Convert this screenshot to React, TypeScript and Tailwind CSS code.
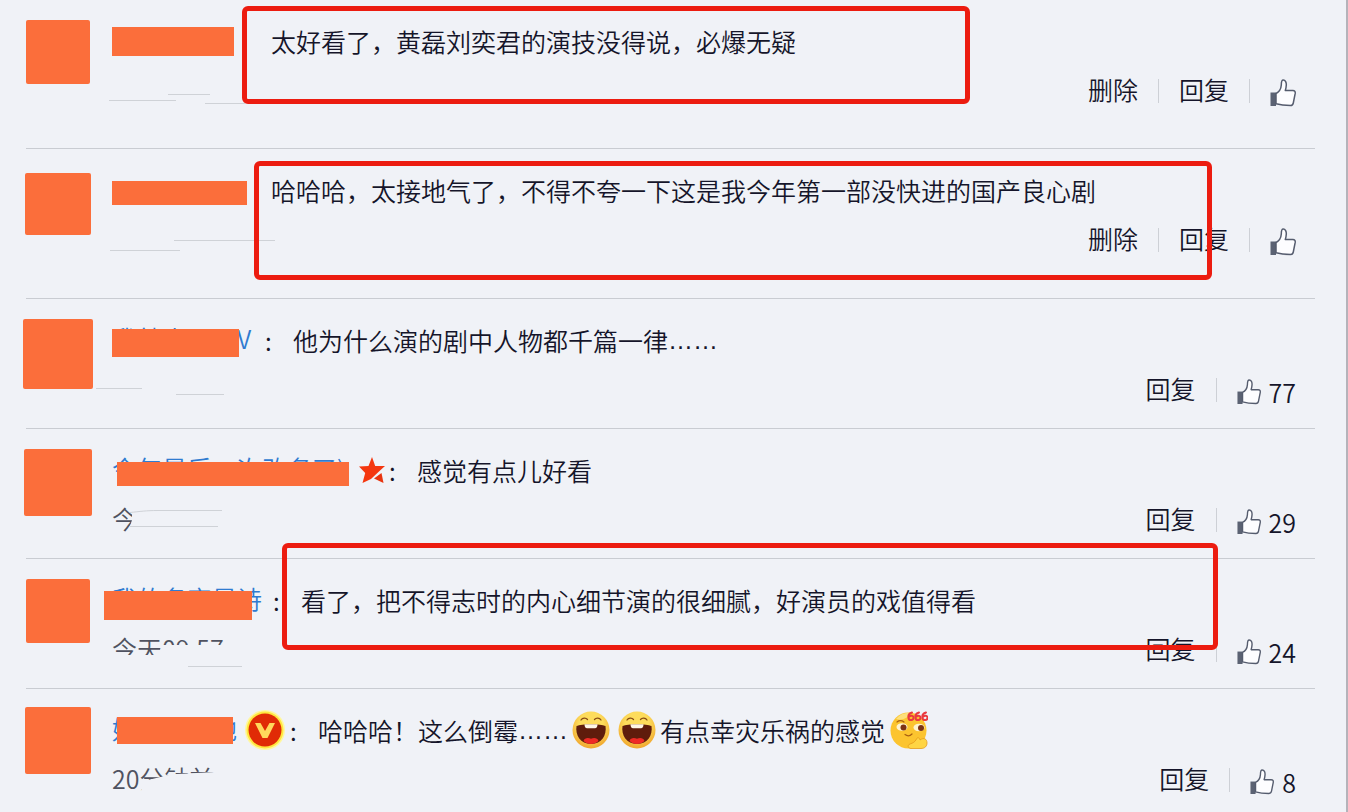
import type { ReactNode } from "react";

type Comment = {
  id: number;
  avatar: string;
  name: string;
  nameBox: string;
  bar: string;
  badge?: ReactNode;
  colon?: boolean;
  text: ReactNode;
  time?: string;
  timeClip?: string;
  scratches: string[];
  canDelete?: boolean;
  likes?: number;
  bottom: string;
  frame?: string;
};

const Thumb = ({ size }: { size: string }) => (
  <svg viewBox="0 0 26 28" className={size} aria-hidden="true">
    <path d="M0.500 13.500h5.500v13.500h-5.500z" fill="#5b6273" />
    <path
      d="M6 14.500c3-1.500 5-4.500 5.300-8.500 0-2.500.4-5 1.900-5 2.300 0 3.200 2.500 3.100 5-.1 2.200-.5 3.800-1 5.500h7.600c2 0 2.500 1.300 2.300 2.900l-1.900 9.600c-.3 1.700-1.200 2.500-2.800 2.500-4.500 0-9.500-.3-14.500-1.800z"
      fill="#fdfdff"
      stroke="#555c6e"
      strokeWidth="1.500"
      strokeLinejoin="round"
    />
  </svg>
);

const Star = () => (
  <svg viewBox="0 0 26 26" className="mr-1 h-[26px] w-[26px]" aria-hidden="true">
    <path
      d="M13 0l3.200 9H26l-5.500 5-8.500 8-8.500 4 2.700-10L0 9.500l9.500-.5z"
      fill="#f4370f"
    />
    <path d="M15 21.500l7.500-5.500 2 10z" fill="#e8340f" />
  </svg>
);

const VBadge = () => (
  <svg viewBox="0 0 40 42" className="mr-[5px] h-[42px] w-10" aria-hidden="true">
    <circle cx="20" cy="21" r="20" fill="#fff7a0" />
    <circle cx="20" cy="21" r="18.500" fill="#ffe83e" />
    <circle cx="20" cy="21" r="16.500" fill="#e02b06" />
    <path d="M10 14h5.500l4.500 8 4.500-8h5.500l-7.500 15h-5z" fill="#ffd95c" />
  </svg>
);

const Laugh = () => (
  <svg viewBox="0 0 38 38" className="mx-1 h-[38px] w-[38px]" role="img" aria-label="哈哈">
    <defs>
      <radialGradient id="laugh" cx="50%" cy="35%" r="65%">
        <stop offset="0.5" stopColor="#fddc5c" />
        <stop offset="1" stopColor="#f0a52c" />
      </radialGradient>
    </defs>
    <circle cx="19" cy="19" r="18.500" fill="url(#laugh)" />
    <path
      d="M9 9c1.500-2.300 5-2.300 6.500-.5M22.500 8.500c1.500-1.800 5-1.800 6.500.5"
      fill="none"
      stroke="#8a4c14"
      strokeWidth="1.300"
      strokeLinecap="round"
    />
    <path d="M4.500 15c5-2.500 24-2.500 29 0 1.500 9-4 18-14.500 18s-16-9-14.500-18z" fill="#5f1c0c" />
    <path d="M12.500 13.300h13c0 2.700-1 3.900-2.500 3.900h-8c-1.500 0-2.500-1.200-2.500-3.900z" fill="#fff6e6" />
    <path d="M11.500 30c1-3.500 5-3.500 7.500-2.200 2.500-1.300 6.500-1.300 7.500 2.200-4 4-11 4-15 0z" fill="#ee2a25" />
  </svg>
);

const Six = () => (
  <svg viewBox="0 0 38 38" className="ml-[5px] h-[38px] w-[38px]" role="img" aria-label="666">
    <circle cx="18.500" cy="19.500" r="18" fill="#fcc42f" />
    <path d="M6 8c4-5 10-7 15-6-3 5-9 8-15 6z" fill="#fde07a" />
    <ellipse cx="12" cy="16" rx="5.500" ry="3.800" fill="#fff3cf" />
    <ellipse cx="29" cy="16.500" rx="5.500" ry="3.800" fill="#fff3cf" />
    <circle cx="13.500" cy="16.500" r="3" fill="#7c3214" />
    <circle cx="31" cy="17" r="3" fill="#7c3214" />
    <path
      d="M7 11c2-1.500 5-1.500 7 0M15 23.500c2 1.500 5 1.500 7-.5"
      fill="none"
      stroke="#a85f12"
      strokeWidth="1.200"
      strokeLinecap="round"
    />
    <path
      d="M20 33c3-1 5-2 6.500-5 .5-2 3.500-1.500 3.500 1 4-3 7-1 7 3 0 3-2 5.500-6 5.500H21c-3 0-4-3.500-1-4.500z"
      fill="#ffd544"
      stroke="#e59a1c"
      strokeWidth="0.800"
    />
    <g fill="none" stroke="#ea3a3f" strokeWidth="2" strokeLinecap="round">
      <path d="M22 1.500c-3 1-4 3.500-3.500 5.500.5 3 5 2.500 5-.2 0-2.300-3-2.800-4.500-.8" />
      <path d="M29 1.500c-3 1-4 3.500-3.500 5.500.5 3 5 2.500 5-.2 0-2.300-3-2.800-4.500-.8" />
      <path d="M36 1.500c-3 1-4 3.500-3.500 5.500.5 3 5 2.500 5-.2 0-2.300-3-2.800-4.500-.8" />
    </g>
  </svg>
);

const Dots = () => <span className="font-['Liberation_Sans',sans-serif]">……</span>;

const comments: Comment[] = [
  {
    id: 1,
    avatar: "mt-5 h-16 w-16",
    name: "",
    nameBox: "w-[159px]",
    bar: "left-0 top-1 h-[29px] w-[122px]",
    text: "太好看了，黄磊刘奕君的演技没得说，必爆无疑",
    scratches: ["M-3 27.500h67", "M56 21.500h42", "M93 30.500h40"],
    canDelete: true,
    bottom: "pb-[39px]",
    frame: "left-[242px] right-[376px] top-1.5 h-[98px]",
  },
  {
    id: 2,
    avatar: "mt-6 h-[62px] w-[66px]",
    name: "",
    nameBox: "w-[159px]",
    bar: "left-0 top-[9px] h-6 w-[135px]",
    text: "哈哈哈，太接地气了，不得不夸一下这是我今年第一部没快进的国产良心剧",
    scratches: ["M-2 28.500h70", "M62 18.500h101"],
    canDelete: true,
    bottom: "pb-10",
    frame: "left-[254px] right-[134px] top-3 h-[119px]",
  },
  {
    id: 3,
    avatar: "mt-5 h-[70px] w-[70px]",
    name: "我就小周周V",
    nameBox: "w-[153px]",
    bar: "left-0 top-[7px] h-7 w-[127px]",
    colon: true,
    text: (
      <>
        他为什么演的剧中人物都千篇一律
        <Dots />
      </>
    ),
    scratches: ["M-16 16.500h46", "M64 22.500h48"],
    likes: 77,
    bottom: "pb-5",
  },
  {
    id: 4,
    avatar: "mt-5 h-[67px] w-[68px]",
    name: "今年最后一次改名了)",
    nameBox: "w-[247px]",
    bar: "left-[5px] top-2.5 h-6 w-[232px]",
    badge: <Star />,
    colon: true,
    text: "感觉有点儿好看",
    time: "今天",
    timeClip: "[clip-path:polygon(0_0,20px_0,20px_50%,14px_100%,0_80%)]",
    scratches: ["M18 10.500c10-1 16-2 28-2h64", "M18 24.500h88"],
    likes: 29,
    bottom: "pb-5",
  },
  {
    id: 5,
    avatar: "mt-5 h-16 w-16",
    name: "我的名字是诗",
    nameBox: "w-[161px]",
    bar: "-left-2 top-[9px] h-[29px] w-[148px]",
    colon: true,
    text: "看了，把不得志时的内心细节演的很细腻，好演员的戏值得看",
    time: "今天09:57",
    timeClip: "[clip-path:polygon(0_0,100%_0,100%_36%,50px_36%,46px_64%,0_64%)]",
    scratches: ["M76 34.500h54"],
    likes: 24,
    bottom: "pb-5",
    frame: "left-[282px] right-[128px] -top-4 h-[107px]",
  },
  {
    id: 6,
    avatar: "mt-4.5 h-[67px] w-[66px]",
    name: "好吃的土地",
    nameBox: "w-[133px]",
    bar: "left-[5px] top-[5px] h-[27px] w-[116px]",
    badge: <VBadge />,
    colon: true,
    text: (
      <>
        哈哈哈！这么倒霉
        <Dots />
        <Laugh />
        <Laugh />
        有点幸灾乐祸的感觉
        <Six />
      </>
    ),
    time: "20分钟前",
    timeClip: "[clip-path:polygon(0_0,100%_0,100%_24%,60px_34%,36px_50%,24px_100%,0_100%)]",
    scratches: [],
    likes: 8,
    bottom: "pb-3",
  },
];

const Divider = () => <span className="h-6 w-px bg-[#cdd0d6]" />;

const CommentRow = ({ item }: { item: Comment }) => {
  return (
    <li className="relative">
      <div className={`flex pl-[23px] pr-[50px] ${item.bottom}`}>
        {/* Avatar */}
        <div className="flex w-[70px] shrink-0 items-start justify-center">
          <div className={`rounded-xs bg-[#fb6e3b] ${item.avatar}`} />
        </div>

        <div className="ml-[19px] min-w-0 flex-1 pt-[23px]">
          {/* Name and message */}
          <div className="flex h-9 items-center whitespace-nowrap">
            <div className={`relative h-9 shrink-0 ${item.nameBox}`}>
              <a href="#" className="block leading-8 text-[#2f7bd0]">
                {item.name}
              </a>
              <span className={`absolute bg-[#fb6e3b] ${item.bar}`} />
            </div>
            {item.badge}
            {item.colon && <span className="w-7 shrink-0">:</span>}
            <p className="flex items-center">{item.text}</p>
          </div>

          {/* Time and actions */}
          <div className="mt-3.5 flex h-9 items-center justify-between">
            <div className="relative h-9 w-40">
              {item.time && (
                <span className={`block h-9 w-32 whitespace-nowrap leading-8 text-[#4f5260] ${item.timeClip}`}>
                  {item.time}
                </span>
              )}
              <svg
                viewBox="0 0 160 36"
                className="absolute inset-0 h-9 w-40 overflow-visible"
                fill="none"
                stroke="#cfd2d7"
                aria-hidden="true"
              >
                {item.scratches.map((d) => (
                  <path key={d} d={d} />
                ))}
              </svg>
            </div>

            <div className="flex items-center gap-5">
              {item.canDelete && (
                <>
                  <button type="button" className="pb-1">
                    删除
                  </button>
                  <Divider />
                </>
              )}
              <button type="button" className="pb-1">
                回复
              </button>
              <Divider />
              <button type="button" aria-label="赞" className="flex items-center gap-2 pt-1">
                <Thumb size={item.likes === undefined ? "h-7 w-[26px]" : "h-[26px] w-6"} />
                {item.likes !== undefined && <span>{item.likes}</span>}
              </button>
            </div>
          </div>
        </div>
      </div>

      {item.id !== 6 && <hr className="ml-[26px] mr-[31px] border-t border-[#c9ccd2]" />}

      {item.frame && (
        <div className={`pointer-events-none absolute z-10 rounded-md border-[5px] border-[#ec1c10] ${item.frame}`} />
      )}
    </li>
  );
};

const App = () => {
  return (
    <main
      lang="zh-CN"
      className="min-h-screen overflow-hidden border-r-2 border-[#b5b3ba] bg-[#f0f2f7] font-['Noto_Sans_CJK_SC',sans-serif] text-[25px] font-[350] leading-9 text-[#15152a]"
    >
      <ul>
        {comments.map((item) => (
          <CommentRow key={item.id} item={item} />
        ))}
      </ul>
    </main>
  );
};

export default App;
